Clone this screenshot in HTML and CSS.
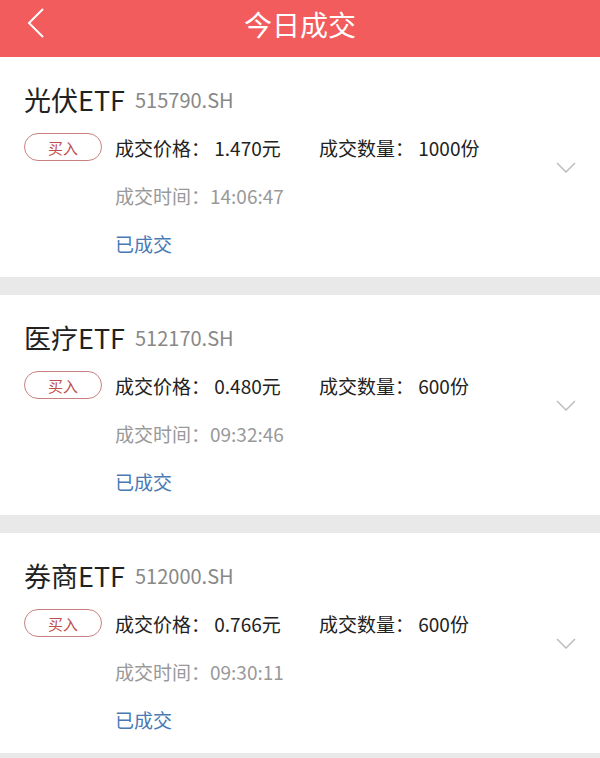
FILE: index.html
```html
<!DOCTYPE html>
<html lang="zh-CN">
<head>
<meta charset="utf-8">
<title>今日成交</title>
<link rel="stylesheet" href="styles.css">
</head>
<body>
<header class="topbar">
  <svg class="back" width="20" height="32" viewBox="0 0 20 32"><polyline points="16,2 2,16 16,30" fill="none" stroke="#fff" stroke-width="2"/></svg>
  <h1 class="title">今日成交</h1>
</header>
<main class="list">
  <section class="card">
    <div class="info">
      <div class="name-row"><span class="name">光伏ETF</span><span class="code">515790.SH</span></div>
      <div class="detail">
        <span class="badge">买入</span>
        <div class="fields">
          <div class="row main-row"><span class="price">成交价格： 1.470元</span><span>成交数量： 1000份</span></div>
          <div class="row time">成交时间：14:06:47</div>
          <div class="row status">已成交</div>
        </div>
      </div>
    </div>
    <svg class="chev" width="20" height="11" viewBox="0 0 20 11"><polyline points="1,1 10,10 19,1" fill="none" stroke="#bdbdbd" stroke-width="1.5"/></svg>
  </section>
  <section class="card">
    <div class="info">
      <div class="name-row"><span class="name">医疗ETF</span><span class="code">512170.SH</span></div>
      <div class="detail">
        <span class="badge">买入</span>
        <div class="fields">
          <div class="row main-row"><span class="price">成交价格： 0.480元</span><span>成交数量： 600份</span></div>
          <div class="row time">成交时间：09:32:46</div>
          <div class="row status">已成交</div>
        </div>
      </div>
    </div>
    <svg class="chev" width="20" height="11" viewBox="0 0 20 11"><polyline points="1,1 10,10 19,1" fill="none" stroke="#bdbdbd" stroke-width="1.5"/></svg>
  </section>
  <section class="card">
    <div class="info">
      <div class="name-row"><span class="name">券商ETF</span><span class="code">512000.SH</span></div>
      <div class="detail">
        <span class="badge">买入</span>
        <div class="fields">
          <div class="row main-row"><span class="price">成交价格： 0.766元</span><span>成交数量： 600份</span></div>
          <div class="row time">成交时间：09:30:11</div>
          <div class="row status">已成交</div>
        </div>
      </div>
    </div>
    <svg class="chev" width="20" height="11" viewBox="0 0 20 11"><polyline points="1,1 10,10 19,1" fill="none" stroke="#bdbdbd" stroke-width="1.5"/></svg>
  </section>
</main>
</body>
</html>
```

FILE: styles.css
```css
* { box-sizing: border-box; margin: 0; padding: 0; }
body {
  background: #e9e9e9;
  font-family: "Noto Sans CJK SC", "Noto Sans", sans-serif;
  color: #222;
}
.topbar {
  height: 57px;
  background: #f35c5c;
  display: flex;
  align-items: center;
  justify-content: center;
  position: relative;
}
.back {
  position: absolute;
  left: 27px;
  top: 7px;
}
.title {
  font-size: 28px;
  font-weight: 400;
  color: #fff;
  line-height: 1;
  margin-top: -9px;
}
.list {
  display: flex;
  flex-direction: column;
  gap: 18px;
}
.card {
  background: #fff;
  height: 220px;
  display: flex;
  align-items: center;
  padding: 0 24px 0 24px;
}
.info {
  flex: 1;
  display: flex;
  flex-direction: column;
  align-self: flex-start;
  padding-top: 22px;
}
.name-row {
  height: 40px;
  display: flex;
  align-items: center;
  gap: 10px;
}
.name {
  font-size: 27px;
  color: #222;
}
.code {
  font-size: 20px;
  color: #888;
}
.detail {
  display: flex;
  margin-top: 13px;
}
.badge {
  width: 78px;
  height: 28px;
  margin-top: 1px;
  border: 1px solid #c98080;
  border-radius: 14px;
  color: #c0504d;
  font-size: 15px;
  display: flex;
  align-items: center;
  justify-content: center;
  margin-right: 13px;
  flex: none;
}
.fields {
  display: flex;
  flex-direction: column;
  gap: 18px;
}
.row {
  height: 30px;
  display: flex;
  align-items: center;
  font-size: 19px;
}
.price {
  width: 204px;
}
.time { color: #999; }
.status { color: #4a7ab5; }
.chev { flex: none; }
```
